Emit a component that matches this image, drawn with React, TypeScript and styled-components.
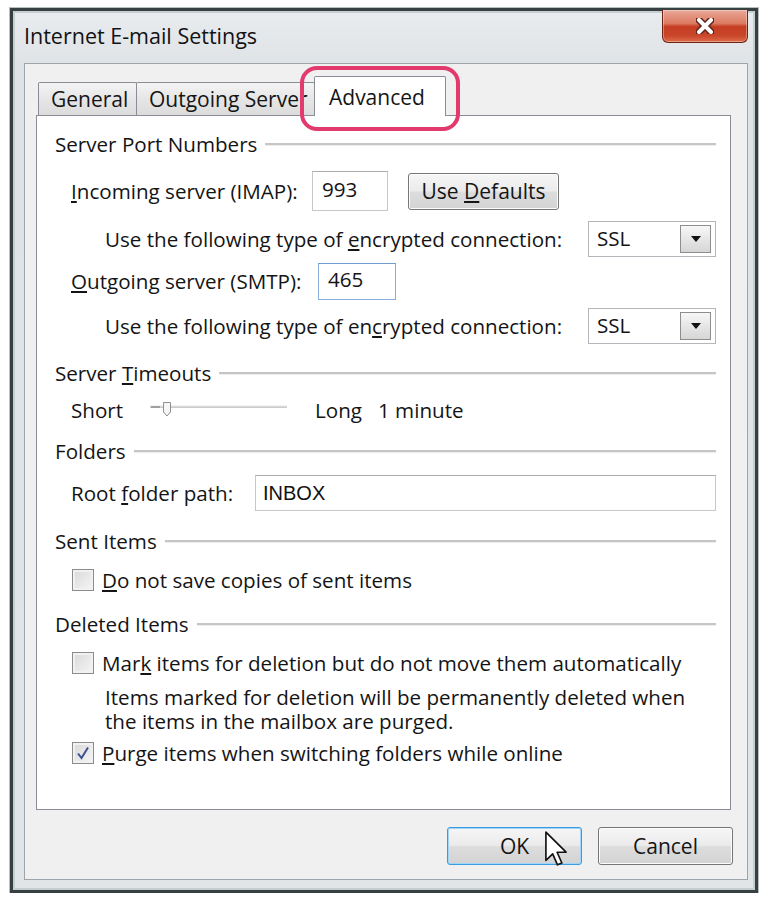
import React from 'react';
import styled, { createGlobalStyle, css } from 'styled-components';

const UI_FONT = `"Open Sans", "Noto Sans", "DejaVu Sans", sans-serif`;

const GlobalStyle = createGlobalStyle`
  body {
    margin: 0;
    background: #ffffff;
    font-family: ${UI_FONT};
  }
  * {
    box-sizing: border-box;
  }
`;

/* window chrome */

const Window = styled.div`
  position: relative;
  margin: 8px 0 0 10px;
  width: 748px;
  height: 885px;
  border: 3px solid #364040;
  box-shadow: inset 0 0 0 2px #c7ced2, 0 0 0 1px #b7c0bd;
  background: linear-gradient(#e9ecef, #dfe3e6 55px, #e2e5e8);
  padding: 0 7px 10px 11px;
  display: flex;
  flex-direction: column;
`;

const TitleBar = styled.div`
  height: 52px;
  display: flex;
  align-items: flex-start;
`;

const Title = styled.div`
  line-height: 50px;
  font-size: 21.5px;
  color: #121212;
`;

const CloseButton = styled.div`
  margin: -1px 0 0 auto;
  width: 86px;
  height: 33px;
  border: 1px solid #6d2417;
  border-top: none;
  border-radius: 0 0 6px 6px;
  background: linear-gradient(#eaa898 0%, #dc7a62 42%, #c43d22 52%, #c9462a 80%, #df6c4a 100%);
  box-shadow: inset 0 0 0 1px rgba(255, 255, 255, 0.35);
  display: flex;
  align-items: center;
  justify-content: center;
`;

const Client = styled.div`
  flex: 1;
  border: 1px solid #9ea5aa;
  background: #f0f0f0;
  padding: 12px 16px 14px 11px;
  display: flex;
  flex-direction: column;
`;

/* tabs */

const TabRow = styled.div`
  position: relative;
  height: 39px;
  padding-left: 3px;
  display: flex;
  align-items: flex-end;
`;

const Tab = styled.div<{ $w: number; $active?: boolean }>`
  position: relative;
  width: ${(p) => p.$w}px;
  height: 33px;
  margin-left: -1px;
  border: 1px solid #8a8d95;
  border-bottom: none;
  border-radius: 2px 2px 0 0;
  background: linear-gradient(#f4f4f4, #e6e6e6 50%, #dcdcdc);
  font-size: 21px;
  color: #151515;
  white-space: nowrap;
  overflow: hidden;
  display: flex;
  align-items: center;
  padding-left: 12px;

  ${(p) =>
    p.$active &&
    css`
      z-index: 1;
      align-self: flex-start;
      height: 40px;
      margin-bottom: -1px;
      background: #ffffff;
      padding-left: 14px;
    `}
`;

const Highlight = styled.div`
  position: absolute;
  left: 264px;
  top: -10px;
  width: 160px;
  height: 65px;
  border: 4px solid #e23a6d;
  border-radius: 17px;
  z-index: 2;
  pointer-events: none;
`;

const Pane = styled.div`
  height: 695px;
  border: 1px solid #8a8d95;
  background: #ffffff;
  padding: 15px 14px 0 18px;
  display: flex;
  flex-direction: column;
  font-size: 20.6px;
  color: #141414;
`;

/* group headers and rows */

const GroupHeader = styled.div<{ $top: number }>`
  margin-top: ${(p) => p.$top}px;
  height: 26px;
  display: flex;
  align-items: center;
  gap: 8px;
  white-space: nowrap;

  &::after {
    content: '';
    flex: 1;
    height: 2px;
    background: #c6c6c6;
    border-bottom: 1px solid #ececec;
  }
`;

const Row = styled.div<{ $top: number; $h: number; $indent?: number }>`
  margin-top: ${(p) => p.$top}px;
  height: ${(p) => p.$h}px;
  padding-left: ${(p) => p.$indent ?? 16}px;
  display: flex;
  align-items: center;
  white-space: nowrap;
`;

const Label = styled.span<{ $w?: number }>`
  flex: none;
  width: ${(p) => (p.$w ? `${p.$w}px` : 'auto')};
`;

const TextBox = styled.div<{ $w?: number; $h: number; $focused?: boolean }>`
  flex: ${(p) => (p.$w ? 'none' : '1')};
  width: ${(p) => (p.$w ? `${p.$w}px` : 'auto')};
  height: ${(p) => p.$h}px;
  border: 1px solid ${(p) => (p.$focused ? '#86aed8' : '#c4c7cc')};
  border-top-color: ${(p) => (p.$focused ? '#6f9ccc' : '#abadb3')};
  background: #ffffff;
  padding: 0 9px 4px;
  display: flex;
  align-items: center;
`;

const PathText = styled.span`
  font-family: "Liberation Sans", Arial, sans-serif;
  font-size: 20px;
  color: #111;
  margin-left: -2px;
  padding-top: 4px;
`;

const PushButton = styled.div<{ $w: number; $h: number; $default?: boolean }>`
  position: relative;
  flex: none;
  width: ${(p) => p.$w}px;
  height: ${(p) => p.$h}px;
  border: 1px solid ${(p) => (p.$default ? '#3a9be0' : '#767676')};
  border-radius: 3px;
  background: linear-gradient(#f6f6f6, #ebebeb 48%, #dddddd 52%, #d3d3d3);
  box-shadow: inset 0 0 0 1px ${(p) => (p.$default ? '#9fd6f7' : '#fcfcfc')};
  display: flex;
  align-items: center;
  justify-content: center;
  font-size: 21px;
  color: #151515;
`;

const Select = styled.div`
  margin-left: auto;
  flex: none;
  width: 128px;
  height: 36px;
  border: 1px solid #b4b6bb;
  background: #ffffff;
  padding: 3px 4px 3px 8px;
  display: flex;
  align-items: center;
`;

const SelectValue = styled.span`
  flex: 1;
  padding-bottom: 3px;
`;

const DropButton = styled.div`
  width: 31px;
  height: 28px;
  border: 1px solid #8d8d8d;
  background: linear-gradient(#f7f7f7, #e6e6e6 50%, #d6d6d6);
  display: flex;
  align-items: center;
  justify-content: center;
`;

const CheckBox = styled.div`
  flex: none;
  width: 22px;
  height: 22px;
  margin: 0 8px 0 1px;
  border: 1px solid #8c8c8c;
  background: linear-gradient(135deg, #d8d8d8, #f6f6f6);
  box-shadow: inset 0 0 0 2px #f1f1f1;
  display: flex;
  align-items: center;
  justify-content: center;
`;

const Note = styled.div`
  margin-top: 9px;
  padding-left: 50px;
  display: flex;
  flex-direction: column;
`;

const NoteLine = styled.div`
  height: 24px;
  line-height: 24px;
  white-space: nowrap;
`;

const Gap = styled.span<{ $w: number }>`
  flex: none;
  width: ${(p) => p.$w}px;
`;

const ButtonRow = styled.div`
  margin: 17px -2px 0 0;
  display: flex;
  justify-content: flex-end;
  gap: 16px;
`;

const Pointer = styled.svg`
  position: absolute;
  left: 97px;
  top: 3px;
  overflow: visible;
`;

const CloseGlyph = () => (
  <svg width="18" height="16" viewBox="0 0 18 16">
    <path d="M3 2 L15 14 M15 2 L3 14" stroke="#5b231a" strokeWidth="7" strokeLinecap="round" />
    <path d="M3 2 L15 14 M15 2 L3 14" stroke="#ffffff" strokeWidth="4" strokeLinecap="round" />
  </svg>
);

const DownArrow = () => (
  <svg width="10" height="6" viewBox="0 0 10 6">
    <path d="M0 0 H10 L5 6 Z" fill="#111" />
  </svg>
);

const Check = () => (
  <svg width="14" height="14" viewBox="0 0 14 14">
    <path d="M2 7.5 L5.5 12 L12 1.5" stroke="#3d5195" strokeWidth="2" fill="none" />
  </svg>
);

const Slider = () => (
  <svg width="137" height="18" viewBox="0 0 137 18">
    <line x1="0" y1="6" x2="137" y2="6" stroke="#cbcbcb" strokeWidth="2" />
    <line x1="0" y1="5" x2="137" y2="5" stroke="#e8e8e8" strokeWidth="1" />
    <path d="M1 6 H10" stroke="#a0a0a0" strokeWidth="2" />
    <path d="M13.5 1.5 H20.5 V11 L17 15 L13.5 11 Z" fill="#f6f6f6" stroke="#8e8e8e" />
  </svg>
);

export default function App() {
  return (
    <>
      <GlobalStyle />
      <Window>
        <TitleBar>
          <Title>Internet E-mail Settings</Title>
          <CloseButton>
            <CloseGlyph />
          </CloseButton>
        </TitleBar>

        <Client>
          <TabRow>
            <Tab $w={99}>General</Tab>
            <Tab $w={179}>Outgoing Server</Tab>
            <Tab $w={132} $active>
              Advanced
            </Tab>
            <Highlight />
          </TabRow>

          <Pane>
            <GroupHeader $top={0}>Server Port Numbers</GroupHeader>
            <Row $top={14} $h={40}>
              <Label $w={241}>
                <u>I</u>ncoming server (IMAP):
              </Label>
              <TextBox $w={76} $h={40}>
                993
              </TextBox>
              <Gap $w={20} />
              <PushButton $w={151} $h={37}>
                Use&nbsp;<u>D</u>efaults
              </PushButton>
            </Row>
            <Row $top={9} $h={38} $indent={50}>
              <Label>
                Use the following type of <u>e</u>ncrypted connection:
              </Label>
              <Select>
                <SelectValue>SSL</SelectValue>
                <DropButton>
                  <DownArrow />
                </DropButton>
              </Select>
            </Row>
            <Row $top={4} $h={38}>
              <Label $w={247}>
                <u>O</u>utgoing server (SMTP):
              </Label>
              <TextBox $w={78} $h={37} $focused>
                465
              </TextBox>
            </Row>
            <Row $top={8} $h={36} $indent={50}>
              <Label>
                Use the following type of en<u>c</u>rypted connection:
              </Label>
              <Select>
                <SelectValue>SSL</SelectValue>
                <DropButton>
                  <DownArrow />
                </DropButton>
              </Select>
            </Row>

            <GroupHeader $top={16}>
              <span>
                Server <u>T</u>imeouts
              </span>
            </GroupHeader>
            <Row $top={11} $h={26}>
              <Label $w={79}>Short</Label>
              <Slider />
              <Gap $w={28} />
              <Label $w={63}>Long</Label>
              <Label>1 minute</Label>
            </Row>

            <GroupHeader $top={15}>Folders</GroupHeader>
            <Row $top={11} $h={36}>
              <Label $w={184}>
                Root <u>f</u>older path:
              </Label>
              <TextBox $h={36}>
                <PathText>INBOX</PathText>
              </TextBox>
            </Row>

            <GroupHeader $top={17}>Sent Items</GroupHeader>
            <Row $top={13} $h={26}>
              <CheckBox />
              <Label>
                <u>D</u>o not save copies of sent items
              </Label>
            </Row>

            <GroupHeader $top={18}>Deleted Items</GroupHeader>
            <Row $top={13} $h={26}>
              <CheckBox />
              <Label>
                Mar<u>k</u> items for deletion but do not move them automatically
              </Label>
            </Row>
            <Note>
              <NoteLine>Items marked for deletion will be permanently deleted when</NoteLine>
              <NoteLine>the items in the mailbox are purged.</NoteLine>
            </Note>
            <Row $top={7} $h={26}>
              <CheckBox>
                <Check />
              </CheckBox>
              <Label>
                <u>P</u>urge items when switching folders while online
              </Label>
            </Row>
          </Pane>

          <ButtonRow>
            <PushButton $w={135} $h={38} $default>
              OK
              <Pointer width="22" height="36" viewBox="0 0 12 19.5">
                <path
                  d="M0.5 0.5 V16 L4.2 12.4 L6.8 18.4 L9.2 17.4 L6.6 11.5 L11.5 11.5 Z"
                  fill="#ffffff"
                  stroke="#111111"
                  strokeWidth="0.9"
                  strokeLinejoin="round"
                />
              </Pointer>
            </PushButton>
            <PushButton $w={135} $h={38}>
              Cancel
            </PushButton>
          </ButtonRow>
        </Client>
      </Window>
    </>
  );
}
